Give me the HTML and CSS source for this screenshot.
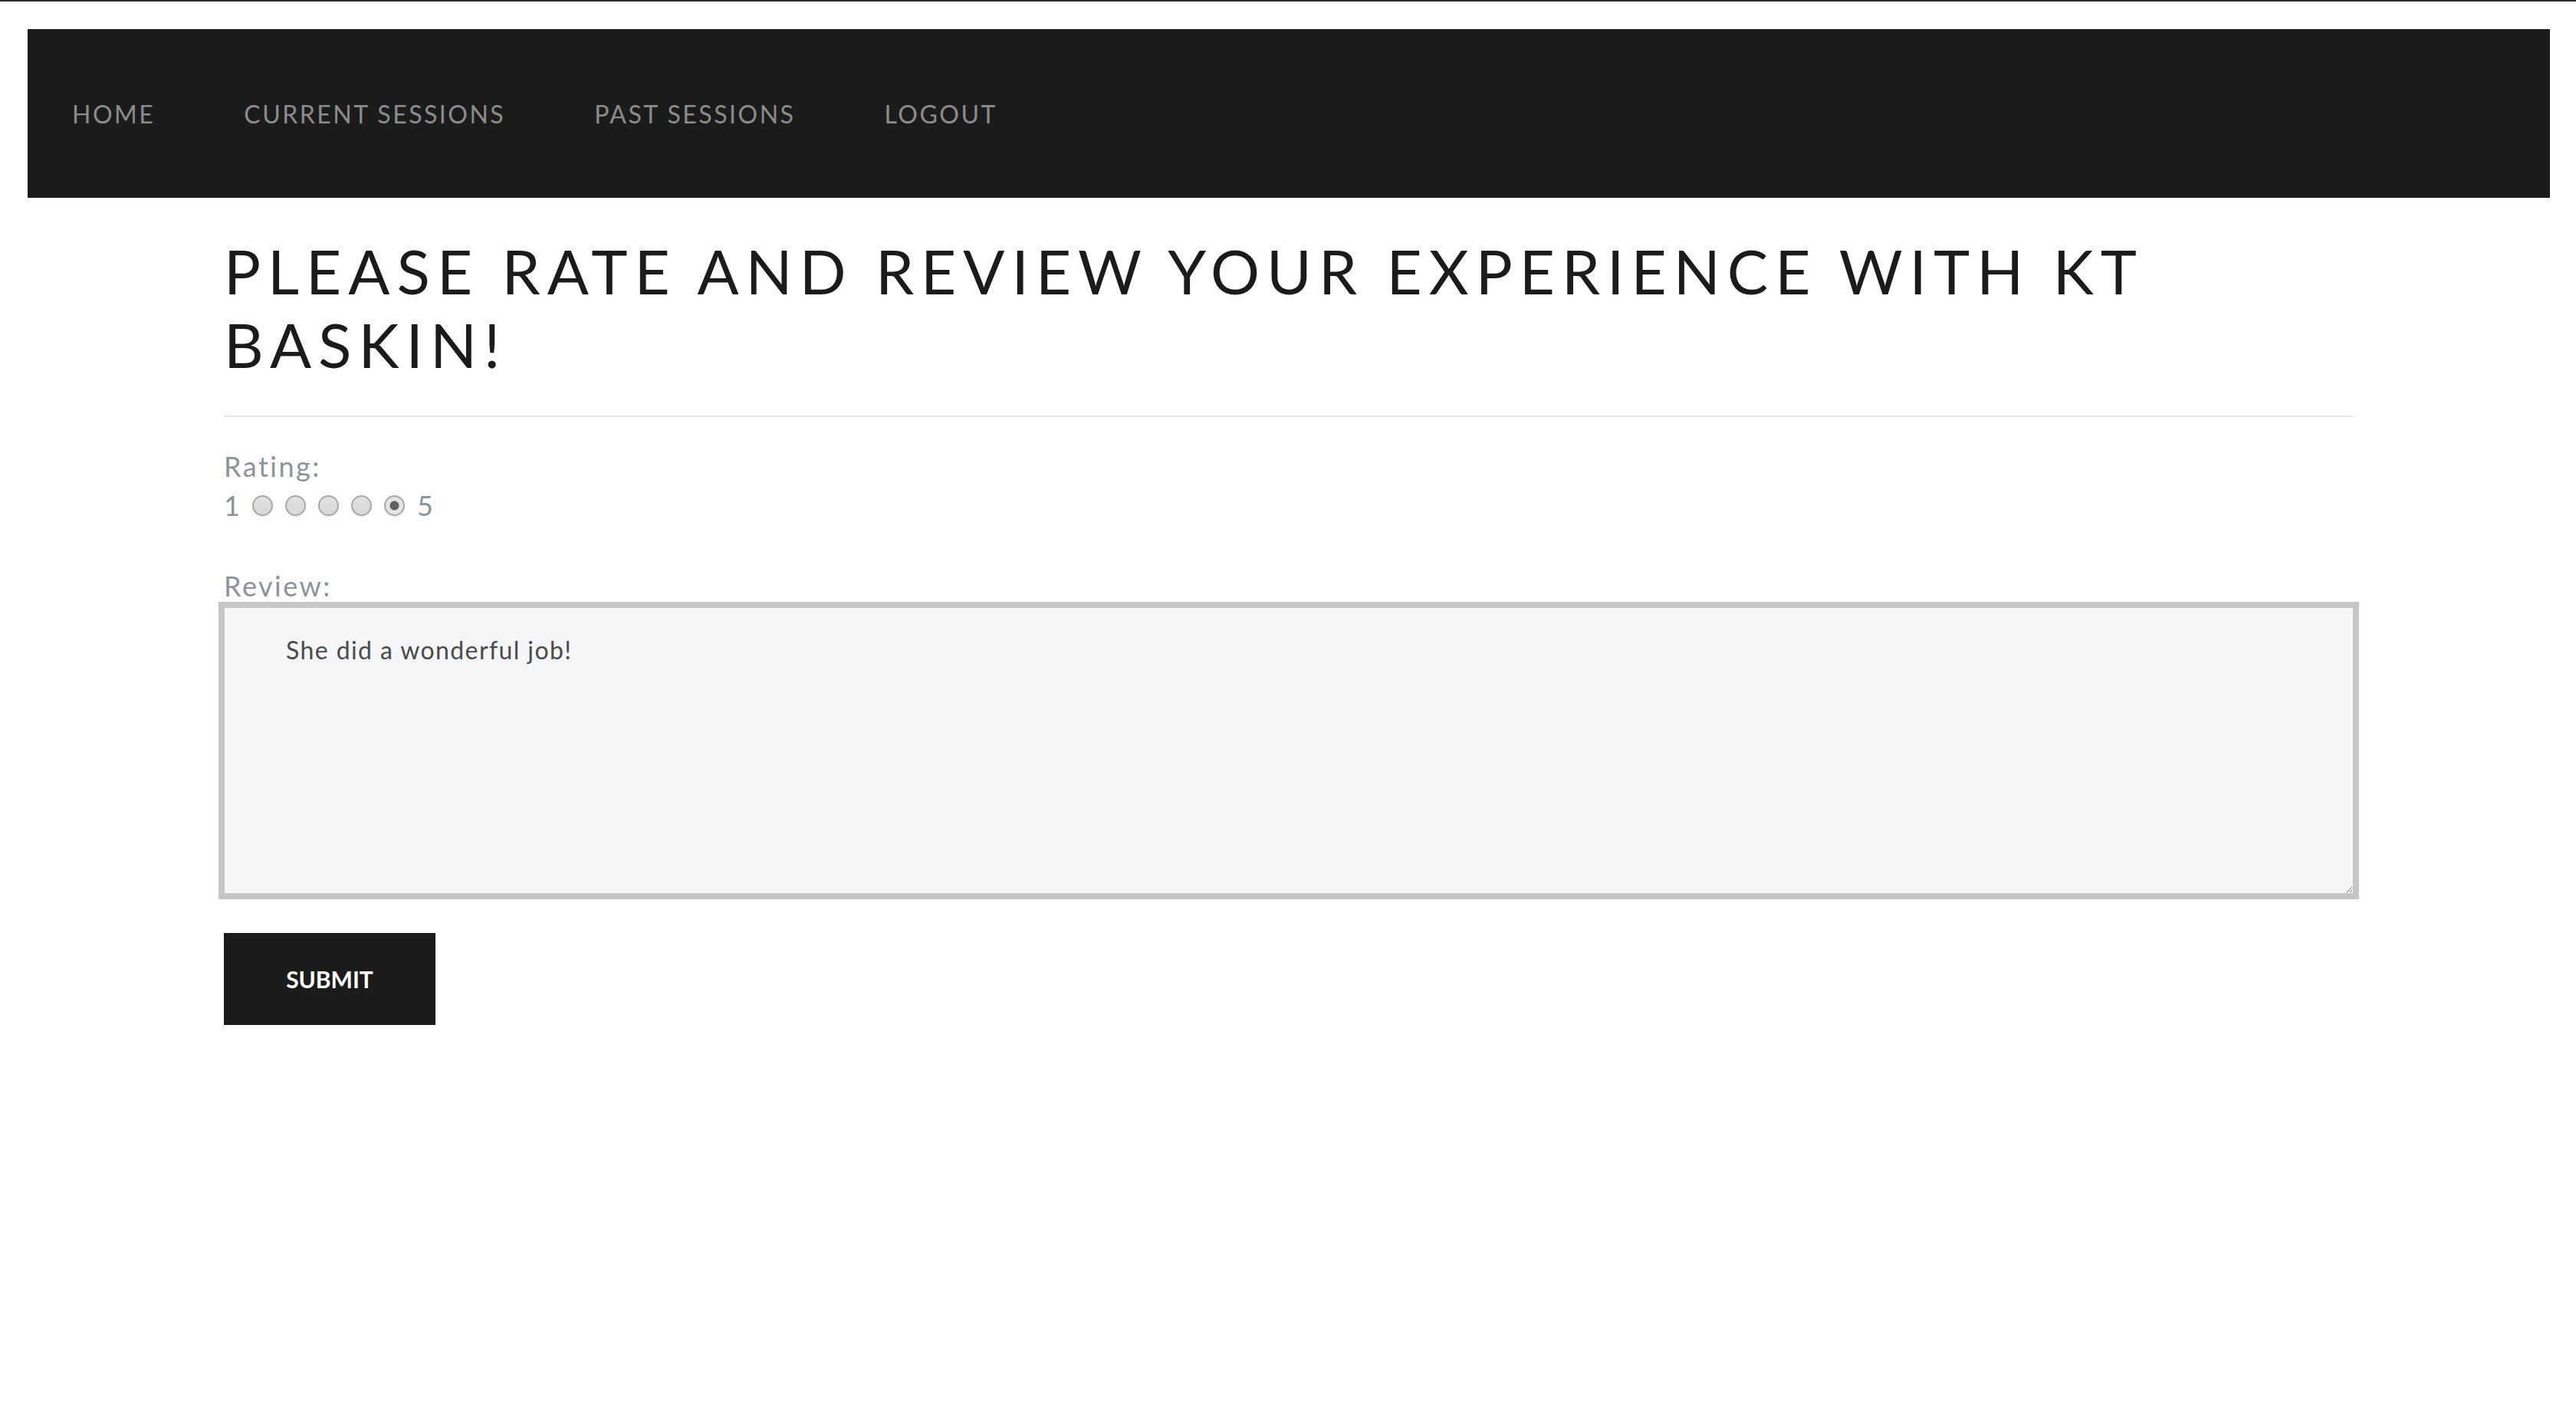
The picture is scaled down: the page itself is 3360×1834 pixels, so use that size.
FILE: index.html
```html
<!DOCTYPE html>
<html lang="en">
<head>
<meta charset="utf-8">
<title>Review</title>
<link rel="stylesheet" href="styles.css">
</head>
<body>
<div class="page">
  <nav class="navbar">
    <a class="nav-link" href="#">HOME</a>
    <a class="nav-link" href="#">CURRENT SESSIONS</a>
    <a class="nav-link" href="#">PAST SESSIONS</a>
    <a class="nav-link" href="#">LOGOUT</a>
  </nav>
  <main class="container">
    <h1 class="title">PLEASE RATE AND REVIEW YOUR EXPERIENCE WITH KT BASKIN!</h1>
    <hr class="divider">
    <form class="review-form">
      <div class="rating-group">
        <label class="field-label">Rating:</label>
        <div class="rating-row">
          <span class="rating-end">1</span>
          <input class="radio" type="radio" name="rating" value="1">
          <input class="radio" type="radio" name="rating" value="2">
          <input class="radio" type="radio" name="rating" value="3">
          <input class="radio" type="radio" name="rating" value="4">
          <input class="radio" type="radio" name="rating" value="5" checked>
          <span class="rating-end">5</span>
        </div>
      </div>
      <div class="review-group">
        <label class="field-label" for="review">Review:</label>
        <textarea class="review-box" id="review">She did a wonderful job!</textarea>
      </div>
      <button class="submit-btn" type="button">SUBMIT</button>
    </form>
  </main>
</div>
</body>
</html>
```
FILE: styles.css
```css
html, body {
  margin: 0;
  padding: 0;
  background: #ffffff;
}
body {
  border-top: 2px solid #2a2a2a;
  font-family: "Lato", "Noto Sans", sans-serif;
}
.page {
  padding: 36px 34px 0 36px;
}
.navbar {
  height: 220px;
  background: #1b1b1b;
  display: flex;
  align-items: center;
  padding-left: 58px;
  gap: 116px;
}
.nav-link {
  color: #8c8c8c;
  text-decoration: none;
  font-size: 32px;
  letter-spacing: 2.5px;
}
.container {
  width: 2778px;
  margin: 0 auto;
}
.title {
  margin: 47px 0 0 0;
  font-size: 80px;
  line-height: 96px;
  font-weight: 400;
  letter-spacing: 9px;
  color: #1b1b1b;
}
.divider {
  margin: 45px 0 0 0;
  border: 0;
  border-top: 2px solid #e8e8e8;
  height: 0;
}
.review-form {
  display: flex;
  flex-direction: column;
  align-items: flex-start;
}
.rating-group {
  margin-top: 44px;
}
.field-label {
  display: block;
  font-size: 36px;
  line-height: 41px;
  letter-spacing: 2.5px;
  color: #8b949c;
}
.rating-row {
  margin-top: 10px;
  display: flex;
  align-items: center;
  gap: 16px;
  height: 41px;
}
.rating-end {
  font-size: 36px;
  line-height: 41px;
  color: #8b949c;
}
.radio {
  -webkit-appearance: none;
  appearance: none;
  margin: 0;
  width: 27px;
  height: 27px;
  border-radius: 50%;
  border: 2px solid #a8a8a8;
  background: linear-gradient(#e2e2e2, #d8d8d8);
  box-shadow: 0 2px 1px rgba(0, 0, 0, 0.06);
  box-sizing: border-box;
}
.radio:checked {
  background: radial-gradient(circle, #606060 0 5.5px, #e4e4e4 6.5px);
}
.review-group {
  margin-top: 64px;
  width: 100%;
}
.review-box {
  display: block;
  box-sizing: border-box;
  width: calc(100% + 14px);
  height: 388px;
  margin: 0 -7px;
  border: 8px solid #c6c6c6;
  background: #f5f6f8;
  padding: 32px 80px;
  font-family: "Lato", "Noto Sans", sans-serif;
  font-size: 32px;
  line-height: 46px;
  letter-spacing: 1.4px;
  color: #4a4a4a;
  outline: none;
}
.submit-btn {
  margin-top: 44px;
  width: 276px;
  height: 120px;
  background: #1b1b1b;
  color: #ffffff;
  border: 0;
  font-family: "Lato", "Noto Sans", sans-serif;
  font-size: 30px;
  font-weight: 700;
  letter-spacing: 0;
  padding: 0;
}
```
